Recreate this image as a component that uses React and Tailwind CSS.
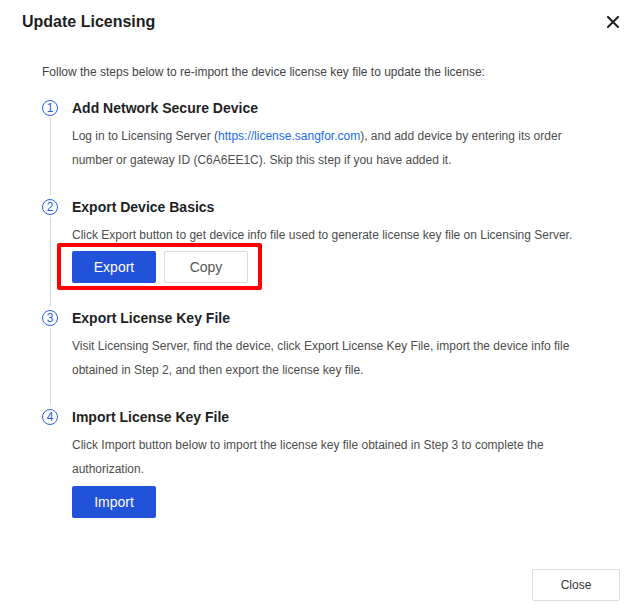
import React from "react";

function Step({ n, title, last, children }) {
  return (
    <div className="flex">
      <div className="flex w-4 shrink-0 flex-col items-center">
        <div className="mt-1 flex h-4 w-4 items-center justify-center rounded-full border border-[#2c5fe3] text-[12px] leading-none text-[#2c5fe3]">
          {n}
        </div>
        {!last && <div className="mt-[2px] w-px flex-1 bg-[#d9d9d9]" />}
      </div>
      <div className={"ml-[14px] flex-1 " + (last ? "" : "pb-[23px]")}>
        <div className="text-[14px] font-bold leading-[24px] text-[#1f1f1f]">{title}</div>
        {children}
      </div>
    </div>
  );
}

export default function App() {
  return (
    <div
      className="relative h-[615px] w-[633px] bg-white"
      style={{ fontFamily: '"Liberation Sans", Arial, sans-serif' }}
    >
      <div className="flex items-center justify-between pl-[22px] pr-[13px] pt-[10px]">
        <div className="text-[16px] font-bold leading-[24px] text-[#1f1f1f]">Update Licensing</div>
        <svg width="12" height="12" viewBox="0 0 12 12" className="mr-[1px]">
          <path d="M1 1 L11 11 M11 1 L1 11" stroke="#1f1f1f" strokeWidth="2" strokeLinecap="square" />
        </svg>
      </div>
      <div className="pl-[42px] pr-[30px] pt-[26px]">
        <div className="text-[12px] leading-[24px] text-[#444]">
          Follow the steps below to re-import the device license key file to update the license:
        </div>
        <div className="mt-[12px] flex flex-col">
          <Step n="1" title="Add Network Secure Device">
            <div className="mt-1 text-[12px] leading-[24px] text-[#4d4d4d]">
              Log in to Licensing Server (<span className="text-[#1a6cf0]">https://license.sangfor.com</span>), and add device by entering its order number or gateway ID (C6A6EE1C). Skip this step if you have added it.
            </div>
          </Step>
          <Step n="2" title="Export Device Basics">
            <div className="mt-1 text-[12px] leading-[24px] text-[#4d4d4d]">
              Click Export button to get device info file used to generate license key file on Licensing Server.
            </div>
            <div className="relative mt-1 flex w-fit gap-2">
              <button className="h-[32px] w-[84px] rounded-[2px] bg-[#2251da] text-[14px] text-white">Export</button>
              <button className="h-[32px] w-[84px] rounded-[2px] border border-[#dcdcdc] bg-white text-[14px] text-[#555]">
                Copy
              </button>
              <div className="pointer-events-none absolute -bottom-[7px] -left-[15px] -right-[14px] -top-[8px] rounded-[2px] border-[4px] border-[#ff0000]" />
            </div>
          </Step>
          <Step n="3" title="Export License Key File">
            <div className="mt-1 text-[12px] leading-[24px] text-[#4d4d4d]">
              Visit Licensing Server, find the device, click Export License Key File, import the device info file obtained in Step 2, and then export the license key file.
            </div>
          </Step>
          <Step n="4" title="Import License Key File" last>
            <div className="mt-1 text-[12px] leading-[24px] text-[#4d4d4d]">
              Click Import button below to import the license key file obtained in Step 3 to complete the authorization.
            </div>
            <button className="mt-[5px] h-[32px] w-[84px] rounded-[2px] bg-[#2251da] text-[14px] text-white">Import</button>
          </Step>
        </div>
      </div>
      <div className="flex justify-end pr-[13px] pt-[51px]">
        <button className="h-[32px] w-[88px] rounded-[2px] border border-[#dcdcdc] bg-white text-[12px] text-[#333]">
          Close
        </button>
      </div>
    </div>
  );
}
